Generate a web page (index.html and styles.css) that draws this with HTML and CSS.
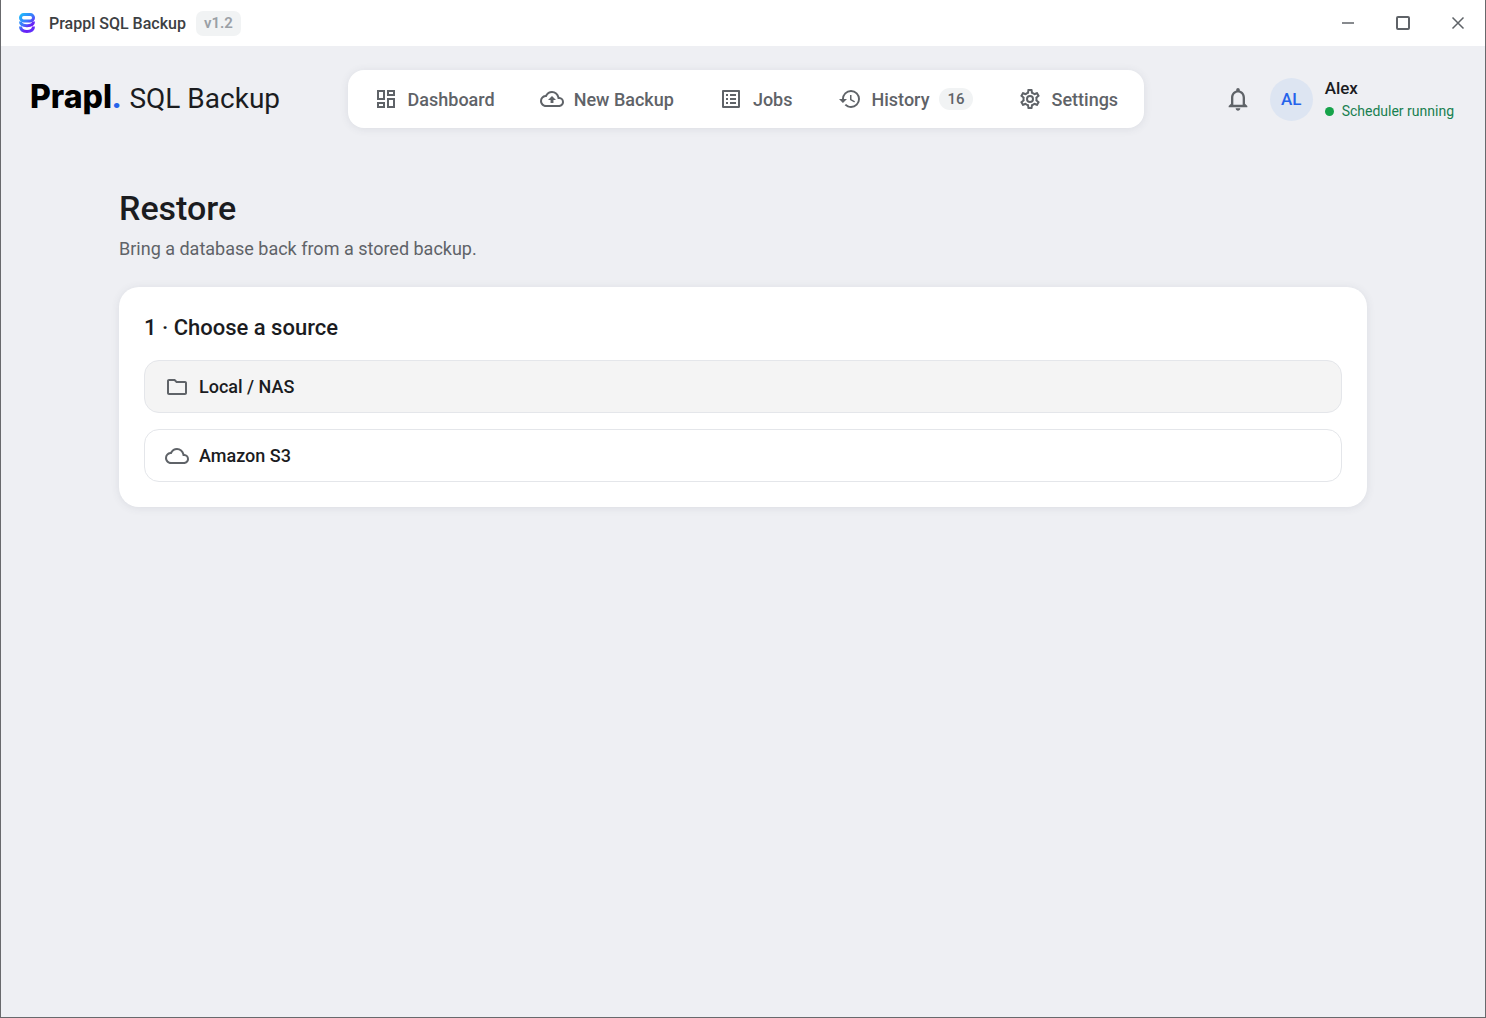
FILE: index.html
```html
<!DOCTYPE html>
<html lang="en">
<head>
<meta charset="utf-8">
<meta name="viewport" content="width=device-width, initial-scale=1">
<title>Prappl SQL Backup</title>
<link rel="stylesheet" href="styles.css">
</head>
<body>
<div class="window">
  <div class="titlebar">
    <svg class="app-icon" viewBox="0 0 18 22" aria-hidden="true">
      <defs>
        <linearGradient id="brand" gradientUnits="userSpaceOnUse" x1="1" y1="2" x2="17" y2="20">
          <stop offset="0" stop-color="#19c3fb"/>
          <stop offset=".45" stop-color="#3f74fb"/>
          <stop offset=".7" stop-color="#6a1df5"/>
          <stop offset="1" stop-color="#5a3bff"/>
        </linearGradient>
      </defs>
      <g fill="none" stroke="url(#brand)" stroke-width="3">
        <rect x="2.500" y="2.500" width="13" height="6.500" rx="3.200"/>
        <path d="M2.500 9.500c0 2.700 2.500 4.200 6.500 4.200s6.500-1.500 6.500-4.200"/>
        <path d="M2.500 14.500c0 3.200 2.500 4.900 6.500 4.900s6.500-1.700 6.500-4.900"/>
      </g>
    </svg>
    <span class="app-name">Prappl SQL Backup</span>
    <span class="version">v1.2</span>
    <div class="window-controls">
      <button type="button" aria-label="Minimize"><svg viewBox="0 0 18 18"><path d="M3 9h12"/></svg></button>
      <button type="button" aria-label="Maximize"><svg class="thick" viewBox="0 0 18 18"><rect x="3" y="3" width="12" height="12" rx="1"/></svg></button>
      <button type="button" aria-label="Close"><svg viewBox="0 0 18 18"><path d="M3.500 3.500l11 11M14.500 3.500l-11 11"/></svg></button>
    </div>
  </div>

  <header class="header">
    <a class="brand" href="#"><span class="wordmark">Prapl<span class="dot">.</span></span><span class="product">SQL Backup</span></a>
    <nav class="nav" aria-label="Main">
      <a href="#"><svg class="icon" viewBox="0 0 24 24"><path d="M19 5v2h-4V5h4M9 5v6H5V5h4m10 8v6h-4v-6h4M9 17v2H5v-2h4M21 3h-8v6h8V3zM11 3H3v10h8V3zm10 8h-8v10h8V11zm-10 4H3v6h8v-6z"/></svg>Dashboard</a>
      <a href="#"><svg class="icon" viewBox="0 0 24 24"><path d="M19.350 10.040A7.490 7.490 0 0 0 12 4C9.110 4 6.600 5.640 5.350 8.040A5.994 5.994 0 0 0 0 14c0 3.310 2.690 6 6 6h13c2.760 0 5-2.240 5-5 0-2.640-2.050-4.780-4.650-4.960zM19 18H6c-2.210 0-4-1.790-4-4 0-2.050 1.530-3.760 3.560-3.970l1.070-.11.5-.95A5.469 5.469 0 0 1 12 6c2.620 0 4.880 1.860 5.390 4.430l.3 1.500 1.530.11A2.980 2.980 0 0 1 22 15c0 1.650-1.350 3-3 3zM8 13h2.550v3h2.900v-3H16l-4-4z"/></svg>New Backup</a>
      <a href="#"><svg class="icon" viewBox="0 0 24 24"><path d="M19 5v14H5V5h14m1.100-2H3.900c-.5 0-.9.4-.9.900v16.200c0 .4.400.9.900.9h16.200c.4 0 .9-.5.900-.9V3.900c0-.5-.5-.9-.9-.9zM11 7h6v2h-6V7zm0 4h6v2h-6v-2zm0 4h6v2h-6zM7 7h2v2H7zm0 4h2v2H7zm0 4h2v2H7z"/></svg>Jobs</a>
      <a href="#"><svg class="icon" viewBox="0 0 24 24"><path d="M13 3a9 9 0 0 0-9 9H1l3.890 3.890.07.14L9 12H6c0-3.870 3.130-7 7-7s7 3.130 7 7-3.130 7-7 7c-1.930 0-3.680-.79-4.940-2.060l-1.420 1.420A8.954 8.954 0 0 0 13 21a9 9 0 0 0 0-18zm-1 5v5l4.250 2.520.77-1.280-3.520-2.090V8H12z"/></svg>History<span class="count">16</span></a>
      <a href="#"><svg class="icon" viewBox="0 0 24 24"><path d="M19.430 12.980c.04-.32.07-.64.070-.98s-.03-.66-.07-.98l2.110-1.650c.19-.15.240-.42.120-.64l-2-3.460a.5.500 0 0 0-.61-.22l-2.490 1c-.52-.4-1.080-.73-1.690-.98l-.38-2.650A.488.488 0 0 0 14 2h-4c-.25 0-.46.180-.49.420l-.38 2.650c-.61.250-1.170.590-1.690.980l-2.490-1a.5.500 0 0 0-.61.220l-2 3.460c-.13.220-.07.490.120.640l2.110 1.650c-.04.320-.07.650-.07.980s.03.660.070.980l-2.110 1.650c-.19.150-.24.420-.12.640l2 3.460c.12.220.390.300.610.220l2.490-1c.52.400 1.080.730 1.690.980l.38 2.650c.03.240.240.420.490.420h4c.25 0 .46-.18.490-.42l.38-2.650c.61-.25 1.170-.59 1.690-.98l2.490 1c.23.090.49 0 .61-.22l2-3.460c.12-.22.070-.49-.12-.64l-2.110-1.650zm-1.980-1.710c.04.310.050.520.050.730s-.02.430-.05.730l-.14 1.130.89.700 1.080.840-.7 1.210-1.270-.51-1.040-.42-.9.680c-.43.320-.84.560-1.250.730l-1.060.430-.16 1.130-.2 1.350h-1.400l-.19-1.350-.16-1.130-1.060-.43c-.43-.18-.83-.41-1.230-.71l-.91-.7-1.060.430-1.270.510-.7-1.210 1.080-.84.890-.7-.14-1.130c-.03-.31-.05-.54-.05-.74s.02-.43.050-.73l.14-1.130-.89-.7-1.080-.84.700-1.210 1.270.510 1.040.420.900-.68c.43-.32.840-.56 1.250-.73l1.060-.43.160-1.130.2-1.350h1.390l.19 1.350.16 1.130 1.060.430c.43.180.830.410 1.230.710l.91.700 1.060-.43 1.270-.51.700 1.210-1.070.850-.89.700.14 1.130zM12 8a4 4 0 1 0 0 8 4 4 0 0 0 0-8zm0 6a2 2 0 1 1 0-4 2 2 0 0 1 0 4z"/></svg>Settings</a>
    </nav>
    <div class="account">
      <button class="bell" type="button" aria-label="Notifications"><svg viewBox="0 0 24 24"><path d="M12 22c1.100 0 2-.9 2-2h-4c0 1.100.9 2 2 2zm6-6v-5c0-3.070-1.630-5.640-4.500-6.320V4c0-.83-.67-1.500-1.500-1.500s-1.500.67-1.500 1.500v.68C7.640 5.360 6 7.920 6 11v5l-2 2v1h16v-1l-2-2zm-2 1H8v-6c0-2.480 1.510-4.500 4-4.500s4 2.020 4 4.500v6z"/></svg></button>
      <span class="avatar">AL</span>
      <div class="user">
        <span class="user-name">Alex</span>
        <span class="status">Scheduler running</span>
      </div>
    </div>
  </header>

  <main class="main">
    <h1>Restore</h1>
    <p class="subtitle">Bring a database back from a stored backup.</p>
    <section class="card">
      <h2>1 · Choose a source</h2>
      <div class="sources">
        <button class="source active" type="button"><svg class="icon" viewBox="0 0 24 24"><path d="M9.170 6l2 2H20v10H4V6h5.170M10 4H4c-1.100 0-1.990.9-1.990 2L2 18c0 1.100.9 2 2 2h16c1.100 0 2-.9 2-2V8c0-1.100-.9-2-2-2h-8l-2-2z"/></svg>Local / NAS</button>
        <button class="source" type="button"><svg class="icon" viewBox="0 0 24 24"><path d="M12 6c2.620 0 4.880 1.860 5.390 4.430l.3 1.500 1.530.110A2.980 2.980 0 0 1 22 15c0 1.650-1.350 3-3 3H6c-2.210 0-4-1.790-4-4 0-2.050 1.530-3.760 3.560-3.970l1.070-.11.500-.95A5.469 5.469 0 0 1 12 6m0-2C9.110 4 6.600 5.640 5.350 8.040A5.994 5.994 0 0 0 0 14c0 3.310 2.690 6 6 6h13c2.760 0 5-2.240 5-5 0-2.640-2.050-4.780-4.650-4.960A7.490 7.490 0 0 0 12 4z"/></svg>Amazon S3</button>
      </div>
    </section>
  </main>
</div>
</body>
</html>
```
FILE: styles.css
```css
* { box-sizing: border-box; }

body {
  margin: 0;
  background: #eeeff3;
  color: #1b1c1f;
  font-family: Roboto, "Liberation Sans", sans-serif;
}

button {
  padding: 0;
  border: 0;
  background: none;
  color: inherit;
  font: inherit;
}

a { color: inherit; text-decoration: none; }

svg { display: block; flex: none; }

.window {
  min-height: 100vh;
  border: 1px solid #68696c;
  border-top: 0;
}

.titlebar {
  display: flex;
  align-items: center;
  height: 46px;
  padding-left: 17px;
  background: #fff;
}

.app-icon { width: 18px; height: 22px; }

.app-name {
  margin: 0 10px 0 13px;
  color: #3c4043;
  font-size: 16px;
  font-weight: 500;
}

.version {
  padding: 0 8px;
  border-radius: 7px;
  background: #f1f3f4;
  color: #9aa0a6;
  font-size: 15px;
  font-weight: 600;
  line-height: 25px;
}

.window-controls { display: flex; margin-left: auto; }

.window-controls button {
  display: grid;
  place-items: center;
  width: 55px;
  height: 46px;
}

.window-controls svg {
  width: 18px;
  height: 18px;
  fill: none;
  stroke: #5f6368;
  stroke-width: 1.500;
}

.window-controls .thick { stroke-width: 2; }

.header {
  display: flex;
  align-items: center;
  justify-content: space-between;
  padding: 24px 31px 0 29px;
}

.brand {
  display: flex;
  align-items: baseline;
  gap: 8px;
  padding-bottom: 4px;
}

.wordmark {
  color: #000;
  font-family: Inter, sans-serif;
  font-size: 32px;
  font-weight: 800;
  line-height: 40px;
}

.dot { color: #2563eb; font-family: Roboto, sans-serif; }

.product { font-size: 28px; }

.nav {
  display: flex;
  gap: 5px;
  padding: 6px;
  border-radius: 16px;
  background: #fff;
  box-shadow: 0 1px 8px rgba(60, 70, 90, .1);
}

.nav a {
  display: flex;
  align-items: center;
  gap: 10px;
  height: 46px;
  padding: 0 20px;
  color: #5f6368;
  font-size: 18px;
  font-weight: 500;
}

.icon { width: 24px; height: 24px; fill: #5f6368; }

.count {
  padding: 0 8px;
  border-radius: 11px;
  background: #f1f3f4;
  font-size: 15px;
  line-height: 22px;
}

.account { display: flex; align-items: center; }

.bell {
  display: grid;
  place-items: center;
  width: 52px;
  height: 52px;
  margin-right: 6px;
}

.bell svg { width: 28px; height: 28px; fill: #5f6368; }

.avatar {
  width: 43px;
  margin-right: 12px;
  border-radius: 50%;
  background: #dde5f2;
  color: #2563eb;
  font-size: 17px;
  font-weight: 500;
  line-height: 43px;
  text-align: center;
}

.user { display: flex; flex-direction: column; gap: 2px; }

.user-name { font-size: 17px; font-weight: 500; line-height: 22px; }

.status {
  display: flex;
  align-items: center;
  gap: 8px;
  color: #188050;
  font-size: 14px;
  line-height: 20px;
}

.status::before {
  content: "";
  width: 9px;
  height: 9px;
  border-radius: 50%;
  background: #16a34a;
}

.main {
  max-width: 1280px;
  margin: 0 auto;
  padding: 57px 16px 32px;
}

h1 {
  margin: 0;
  font-size: 34px;
  font-weight: 500;
  line-height: 46px;
}

.subtitle {
  margin: 6px 0 26px;
  color: #5f6368;
  font-size: 18px;
  line-height: 24px;
}

.card {
  padding: 27px 25px 25px;
  border-radius: 20px;
  background: #fff;
  box-shadow: 0 1px 8px rgba(60, 70, 90, .1);
}

h2 {
  margin: 0 0 18px;
  font-size: 22px;
  font-weight: 500;
  line-height: 28px;
}

.sources { display: flex; flex-direction: column; gap: 16px; }

.source {
  display: flex;
  align-items: center;
  gap: 10px;
  height: 53px;
  padding: 0 20px;
  border: 1px solid #e4e6ea;
  border-radius: 15px;
  font-size: 18px;
  font-weight: 500;
}

.active { background: #f4f4f4; }
```
